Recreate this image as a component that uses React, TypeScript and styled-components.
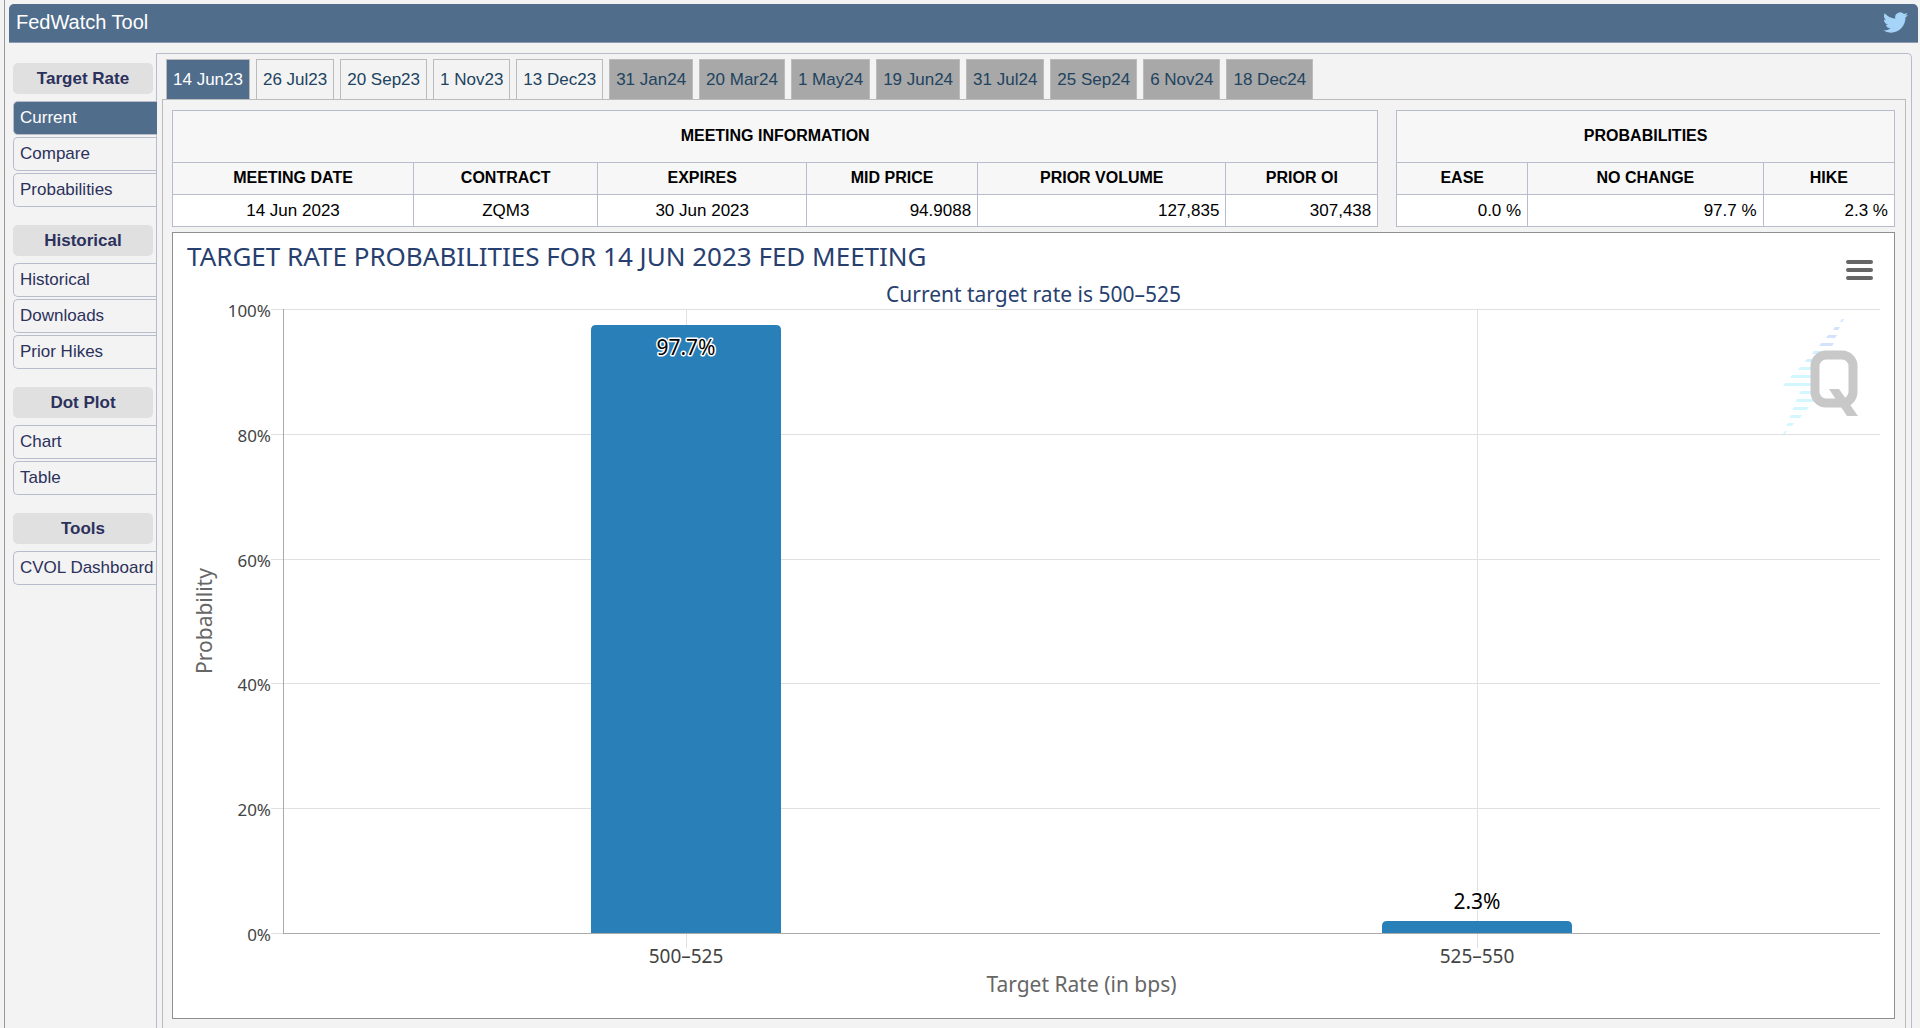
import { useLayoutEffect, useRef, useState } from "react";
import styled, { createGlobalStyle } from "styled-components";

const sans = '"Liberation Sans", Arial, Helvetica, sans-serif';
const chartFont = '"Noto Sans", "Open Sans", sans-serif';

const GlobalStyle = createGlobalStyle`
  *, *::before, *::after { box-sizing: border-box; }
  body { margin: 0; background: #f3f3f3; font-family: ${sans}; font-size: 17px; color: #000; }
`;

const Page = styled.div`
  display: flex;
  flex-direction: column;
  min-height: 100vh;
  margin-left: 4px;
  padding: 4px 2px 0 4px;
  border-left: 1px solid #999;
`;

const Header = styled.header`
  display: flex;
  align-items: center;
  justify-content: space-between;
  height: 39px;
  padding: 0 10px 0 7px;
  background: #506d8b;
  border-bottom: 1px solid #8e9ab3;
  border-radius: 5px 5px 0 0;
`;

const Title = styled.h1`
  margin: 0;
  padding-bottom: 3px;
  font-size: 20px;
  font-weight: 400;
  line-height: 22px;
  color: #fff;
`;

const IconLink = styled.a`
  display: flex;
  padding-bottom: 2px;
  color: #a6d4f9;
`;

const Body = styled.div`
  display: flex;
  flex: 1;
  padding: 10px 6px 0 4px;
`;

const Sidebar = styled.nav`
  display: flex;
  flex-direction: column;
  gap: 18px;
  width: 143px;
  flex: none;
  padding-top: 10px;
`;

const Group = styled.section`
  display: flex;
  flex-direction: column;
  gap: 2px;
`;

const GroupTitle = styled.h2`
  margin: 0 3px 5px 0;
  border-radius: 5px;
  background: #e0e0e0;
  color: #2c315c;
  font-size: 17px;
  line-height: 31px;
  font-weight: 700;
  text-align: center;
`;

const NavItem = styled.a<{ $active?: boolean }>`
  position: relative;
  height: 34px;
  padding-left: 6px;
  margin-right: ${(p) => (p.$active ? "-1px" : "0")};
  border: 1px solid #b9bccb;
  border-right: 0;
  border-radius: 5px 0 0 5px;
  background: ${(p) => (p.$active ? "#506d8b" : "#f3f3f3")};
  color: ${(p) => (p.$active ? "#fff" : "#2c315c")};
  line-height: 31px;
  white-space: nowrap;
  text-decoration: none;
`;

const Outer = styled.main`
  display: flex;
  flex-direction: column;
  flex: 1;
  min-width: 0;
  padding: 5px 5px 0 5px;
  border: 1px solid #b9bccb;
  border-bottom: 0;
  border-radius: 0 5px 0 0;
`;

const Tabs = styled.div`
  display: flex;
  gap: 6px;
  padding-left: 4px;
`;

const Tab = styled.button<{ $tone: string }>`
  height: 40px;
  padding: 0 6px;
  border: 1px solid #bbb;
  border-bottom: 0;
  background: ${(p) => (p.$tone === "active" ? "#506d8b" : p.$tone === "far" ? "#a8a8a8" : "#f3f3f3")};
  color: ${(p) => (p.$tone === "active" ? "#fff" : "#21435f")};
  font: 17px ${sans};
  white-space: nowrap;
`;

const Panel = styled.div`
  flex: 1;
  padding: 10px 10px 9px 9px;
  border: 1px solid #bbb;
  border-bottom: 0;
`;

const Tables = styled.div`
  display: grid;
  grid-template-columns: 1207fr 499fr;
  gap: 18px;
  margin-bottom: 5px;
`;

const Table = styled.table`
  width: 100%;
  border-collapse: collapse;
  table-layout: fixed;
`;

const Col = styled.col<{ $share: number }>`
  width: ${(p) => p.$share}%;
`;

const Th = styled.th<{ $tall?: boolean }>`
  height: ${(p) => (p.$tall ? 52 : 32)}px;
  padding: 0 0 2px;
  border: 1px solid #b9bccb;
  background: #f7f7f7;
  font-size: 16px;
`;

const Td = styled.td<{ $numeric?: boolean }>`
  height: 32px;
  padding: 0 6px;
  border: 1px solid #b9bccb;
  background: #fff;
  text-align: ${(p) => (p.$numeric ? "right" : "center")};
`;

const ChartBox = styled.div`
  position: relative;
  border: 1px solid #8f8f8f;
  background: #fff;

  svg { display: block; }
`;

const MenuButton = styled.button`
  position: absolute;
  top: 21px;
  right: 15px;
  padding: 6px;
  border: 0;
  background: none;
`;

const ChartTitle = styled.text`
  font: 26px ${chartFont};
  fill: #27406f;
`;

const Subtitle = styled.text`
  font: 21px ${chartFont};
  fill: #27406f;
`;

const AxisLabel = styled.text<{ $size: number }>`
  font: ${(p) => p.$size}px ${chartFont};
  fill: #444;
`;

const AxisTitle = styled.text`
  font: 21px ${chartFont};
  fill: #666;
`;

const DataLabel = styled.text`
  font: 21px ${chartFont};
  fill: #000;
  stroke: #fff;
  stroke-width: 3px;
  stroke-linejoin: round;
  paint-order: stroke;
`;

type Column = { label: string; value: string; share: number; numeric?: boolean };

const meeting: Column[] = [
  { label: "MEETING DATE", value: "14 Jun 2023", share: 20 },
  { label: "CONTRACT", value: "ZQM3", share: 15.3 },
  { label: "EXPIRES", value: "30 Jun 2023", share: 17.3 },
  { label: "MID PRICE", value: "94.9088", share: 14.2, numeric: true },
  { label: "PRIOR VOLUME", value: "127,835", share: 20.6, numeric: true },
  { label: "PRIOR OI", value: "307,438", share: 12.6, numeric: true },
];

const probabilities: Column[] = [
  { label: "EASE", value: "0.0 %", share: 26.3, numeric: true },
  { label: "NO CHANGE", value: "97.7 %", share: 47.3, numeric: true },
  { label: "HIKE", value: "2.3 %", share: 26.4, numeric: true },
];

const menu = [
  { title: "Target Rate", items: ["Current", "Compare", "Probabilities"] },
  { title: "Historical", items: ["Historical", "Downloads", "Prior Hikes"] },
  { title: "Dot Plot", items: ["Chart", "Table"] },
  { title: "Tools", items: ["CVOL Dashboard"] },
];

const meetings = [
  "14 Jun23", "26 Jul23", "20 Sep23", "1 Nov23", "13 Dec23", "31 Jan24", "20 Mar24",
  "1 May24", "19 Jun24", "31 Jul24", "25 Sep24", "6 Nov24", "18 Dec24",
];

const bars = [
  { range: "500–525", value: 97.7 },
  { range: "525–550", value: 2.3 },
];

function InfoTable({ title, columns }: { title: string; columns: Column[] }) {
  return (
    <Table>
      <colgroup>
        {columns.map((c) => <Col key={c.label} $share={c.share} />)}
      </colgroup>
      <thead>
        <tr><Th $tall colSpan={columns.length}>{title}</Th></tr>
        <tr>{columns.map((c) => <Th key={c.label} scope="col">{c.label}</Th>)}</tr>
      </thead>
      <tbody>
        <tr>{columns.map((c) => <Td key={c.label} $numeric={c.numeric}>{c.value}</Td>)}</tr>
      </tbody>
    </Table>
  );
}

/* Each stripe of the watermark: left edge, right edge, centre line. */
const stripes = [
  [58, 61, 2], [51, 57, 10], [44, 54, 18], [37, 51, 26], [30, 47, 34], [23, 40, 42], [16, 32, 50], [8, 32, 58],
  [1, 32, 66], [17, 32, 74], [13, 32, 82], [10, 26, 90], [7, 19, 98], [4, 11, 106], [1, 4, 114],
];

function Watermark({ x, y }: { x: number; y: number }) {
  return (
    <g transform={`translate(${x} ${y})`}>
      {stripes.map(([l, r, c]) => (
        <polygon
          key={c}
          points={`${l},${c + 2} ${l + 2},${c - 1} ${r + 1},${c - 1} ${r - 1},${c + 2}`}
          fill={c < 32 ? "#d3e3fe" : c < 50 ? "#d3f0fe" : "#d3f7fe"}
        />
      ))}
      <rect x="33" y="37" width="38" height="48" rx="11" fill="#fff" stroke="#c8c8c8" strokeWidth="9" />
      <polygon points="47,71 57,71 76,98 65,98" fill="#c8c8c8" />
    </g>
  );
}

function Chart() {
  const box = useRef<HTMLDivElement>(null);
  const [width, setWidth] = useState(1721);

  useLayoutEffect(() => {
    const node = box.current;
    if (!node) return;
    const measure = () => setWidth(node.clientWidth);
    measure();
    const observer = new ResizeObserver(measure);
    observer.observe(node);
    return () => observer.disconnect();
  }, []);

  const height = 785;
  const left = 110;
  const right = width - 14;
  const top = 76;
  const bottom = 700;
  const inset = 8;
  const band = (right - left - inset * 2) / bars.length;
  const barWidth = Math.round(band * 0.24);
  const yOf = (v: number) => Math.round(bottom - ((bottom - top) * v) / 100);

  return (
    <ChartBox ref={box}>
      <svg width={width} height={height} role="img" aria-label="Target rate probabilities">
        <ChartTitle x="14" y="33">TARGET RATE PROBABILITIES FOR 14 JUN 2023 FED MEETING</ChartTitle>
        <Subtitle x={width / 2} y="69" textAnchor="middle">Current target rate is 500–525</Subtitle>
        {[0, 20, 40, 60, 80, 100].map((v) => (
          <g key={v}>
            <line x1={left - 12} x2={right} y1={yOf(v) + 0.5} y2={yOf(v) + 0.5} stroke="#e0e0e0" />
            <AxisLabel $size={17} x={left - 12} y={yOf(v) + 8} textAnchor="end">{v}%</AxisLabel>
          </g>
        ))}
        {bars.map((b, i) => {
          const x = Math.round(left + inset + band * (i + 0.5));
          return <line key={b.range} x1={x + 0.5} x2={x + 0.5} y1={top} y2={bottom + 15} stroke="#e0e0e0" />;
        })}
        <Watermark x={width - 112} y={85} />
        {bars.map((b, i) => {
          const x = Math.round(left + inset + band * (i + 0.5));
          const y = yOf(b.value) + 2;
          const l = x - barWidth / 2;
          const r = x + barWidth / 2;
          return (
            <g key={b.range}>
              <path
                d={`M${l} ${bottom}V${y + 5}Q${l} ${y} ${l + 5} ${y}H${r - 5}Q${r} ${y} ${r} ${y + 5}V${bottom}Z`}
                fill="#2980b9"
              />
              <DataLabel x={x} y={b.value > 50 ? y + 30 : y - 12} textAnchor="middle">{b.value}%</DataLabel>
              <AxisLabel $size={19} x={x} y={bottom + 30} textAnchor="middle">{b.range}</AxisLabel>
            </g>
          );
        })}
        <line x1={left + 0.5} x2={left + 0.5} y1={top} y2={bottom} stroke="#aaa" />
        <line x1={left} x2={right} y1={bottom + 0.5} y2={bottom + 0.5} stroke="#aaa" />
        <AxisTitle x={(left + right) / 2} y={bottom + 59} textAnchor="middle">Target Rate (in bps)</AxisTitle>
        <AxisTitle transform={`translate(39 ${(top + bottom) / 2}) rotate(-90)`} textAnchor="middle">Probability</AxisTitle>
      </svg>
      <MenuButton type="button" aria-label="Chart menu">
        <svg width="27" height="20" viewBox="0 0 27 20" stroke="#666" strokeWidth="4" strokeLinecap="round">
          <path d="M2 2H25M2 10H25M2 18H25" />
        </svg>
      </MenuButton>
    </ChartBox>
  );
}

export default function App() {
  return (
    <>
      <GlobalStyle />
      <Page>
        <Header>
          <Title>FedWatch Tool</Title>
          <IconLink href="#twitter" aria-label="Twitter">
            <svg width="25" height="25" viewBox="0 0 24 24" fill="currentColor">
              <path d="M23.95 4.57a10 10 0 0 1-2.82.77 4.96 4.96 0 0 0 2.16-2.72c-.95.55-2 .95-3.13 1.18a4.92 4.92 0 0 0-8.38 4.48C7.69 8.1 4.07 6.13 1.64 3.16a4.82 4.82 0 0 0-.67 2.48c0 1.71.87 3.21 2.19 4.1a4.9 4.9 0 0 1-2.23-.62v.06a4.92 4.92 0 0 0 3.95 4.83 5 5 0 0 1-2.21.08 4.94 4.94 0 0 0 4.6 3.42A9.87 9.87 0 0 1 0 19.54a13.99 13.99 0 0 0 7.56 2.21c9.05 0 14-7.5 14-13.98 0-.21 0-.42-.02-.63a9.94 9.94 0 0 0 2.46-2.55z" />
            </svg>
          </IconLink>
        </Header>
        <Body>
          <Sidebar>
            {menu.map((g) => (
              <Group key={g.title}>
                <GroupTitle>{g.title}</GroupTitle>
                {g.items.map((item) => (
                  <NavItem key={item} href="#" $active={item === "Current"}>{item}</NavItem>
                ))}
              </Group>
            ))}
          </Sidebar>
          <Outer>
            <Tabs role="tablist">
              {meetings.map((m, i) => (
                <Tab key={m} type="button" role="tab" aria-selected={i === 0} $tone={i === 0 ? "active" : i > 4 ? "far" : "near"}>
                  {m}
                </Tab>
              ))}
            </Tabs>
            <Panel>
              <Tables>
                <InfoTable title="MEETING INFORMATION" columns={meeting} />
                <InfoTable title="PROBABILITIES" columns={probabilities} />
              </Tables>
              <Chart />
            </Panel>
          </Outer>
        </Body>
      </Page>
    </>
  );
}
